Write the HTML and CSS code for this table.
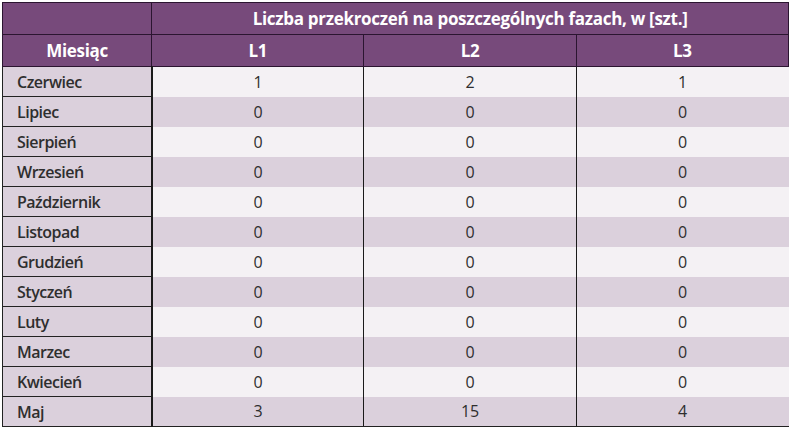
FILE: index.html
```html
<!DOCTYPE html>
<html lang="pl">
<head>
<meta charset="utf-8">
<link rel="stylesheet" href="styles.css">
</head>
<body>
<table class="tbl">
  <colgroup>
    <col class="c-month"><col class="c-val"><col class="c-val"><col class="c-val">
  </colgroup>
  <thead>
    <tr class="h1">
      <th class="blank"></th>
      <th colspan="3">Liczba przekroczeń na poszczególnych fazach, w [szt.]</th>
    </tr>
    <tr class="h2">
      <th>Miesiąc</th><th>L1</th><th>L2</th><th>L3</th>
    </tr>
  </thead>
  <tbody>
    <tr><th>Czerwiec</th><td>1</td><td>2</td><td>1</td></tr>
    <tr><th>Lipiec</th><td>0</td><td>0</td><td>0</td></tr>
    <tr><th>Sierpień</th><td>0</td><td>0</td><td>0</td></tr>
    <tr><th>Wrzesień</th><td>0</td><td>0</td><td>0</td></tr>
    <tr><th>Październik</th><td>0</td><td>0</td><td>0</td></tr>
    <tr><th>Listopad</th><td>0</td><td>0</td><td>0</td></tr>
    <tr><th>Grudzień</th><td>0</td><td>0</td><td>0</td></tr>
    <tr><th>Styczeń</th><td>0</td><td>0</td><td>0</td></tr>
    <tr><th>Luty</th><td>0</td><td>0</td><td>0</td></tr>
    <tr><th>Marzec</th><td>0</td><td>0</td><td>0</td></tr>
    <tr><th>Kwiecień</th><td>0</td><td>0</td><td>0</td></tr>
    <tr><th>Maj</th><td>3</td><td>15</td><td>4</td></tr>
  </tbody>
</table>
</body>
</html>
```
FILE: styles.css
```css
html, body {
  margin: 0;
  padding: 0;
  background: #ffffff;
}
body {
  padding: 2px 0 0 2px;
  font-family: "Open Sans", "Noto Sans", sans-serif;
}
.tbl {
  border-collapse: collapse;
  table-layout: fixed;
  width: 787px;
}
.c-month { width: 149px; }
.c-val { width: 212px; }

.tbl thead th {
  background: #774a7b;
  color: #ffffff;
  font-weight: 700;
  font-size: 17px;
  letter-spacing: -0.3px;
  height: 31px;
  line-height: 20px;
  padding: 0;
  text-align: center;
  border: 1px solid #2b1530;
}
.tbl tbody th,
.tbl tbody td {
  height: 29px;
  line-height: 20px;
  padding: 0;
  color: #2e2e2e;
}
.tbl tbody th {
  background: #dbd0dc;
  text-align: left;
  padding-left: 14px;
  font-size: 16px;
  font-weight: 600;
  letter-spacing: -0.5px;
  border-left: 1px solid #222;
  border-right: 2px solid #1a1a1a;
  border-bottom: 1px solid #222;
}
.tbl tbody td {
  text-align: center;
  font-size: 16px;
  font-weight: 400;
  border-left: 1px solid #1a1a1a;
  border-right: 1px solid #1a1a1a;
}
.tbl tbody td:last-child {
  border-right: none;
}
.tbl tbody tr:nth-child(odd) td { background: #f4f1f4; }
.tbl tbody tr:nth-child(even) td { background: #dbd0dc; }
.tbl tbody tr:last-child th,
.tbl tbody tr:last-child td {
  border-bottom: 1px solid #222;
}
```
